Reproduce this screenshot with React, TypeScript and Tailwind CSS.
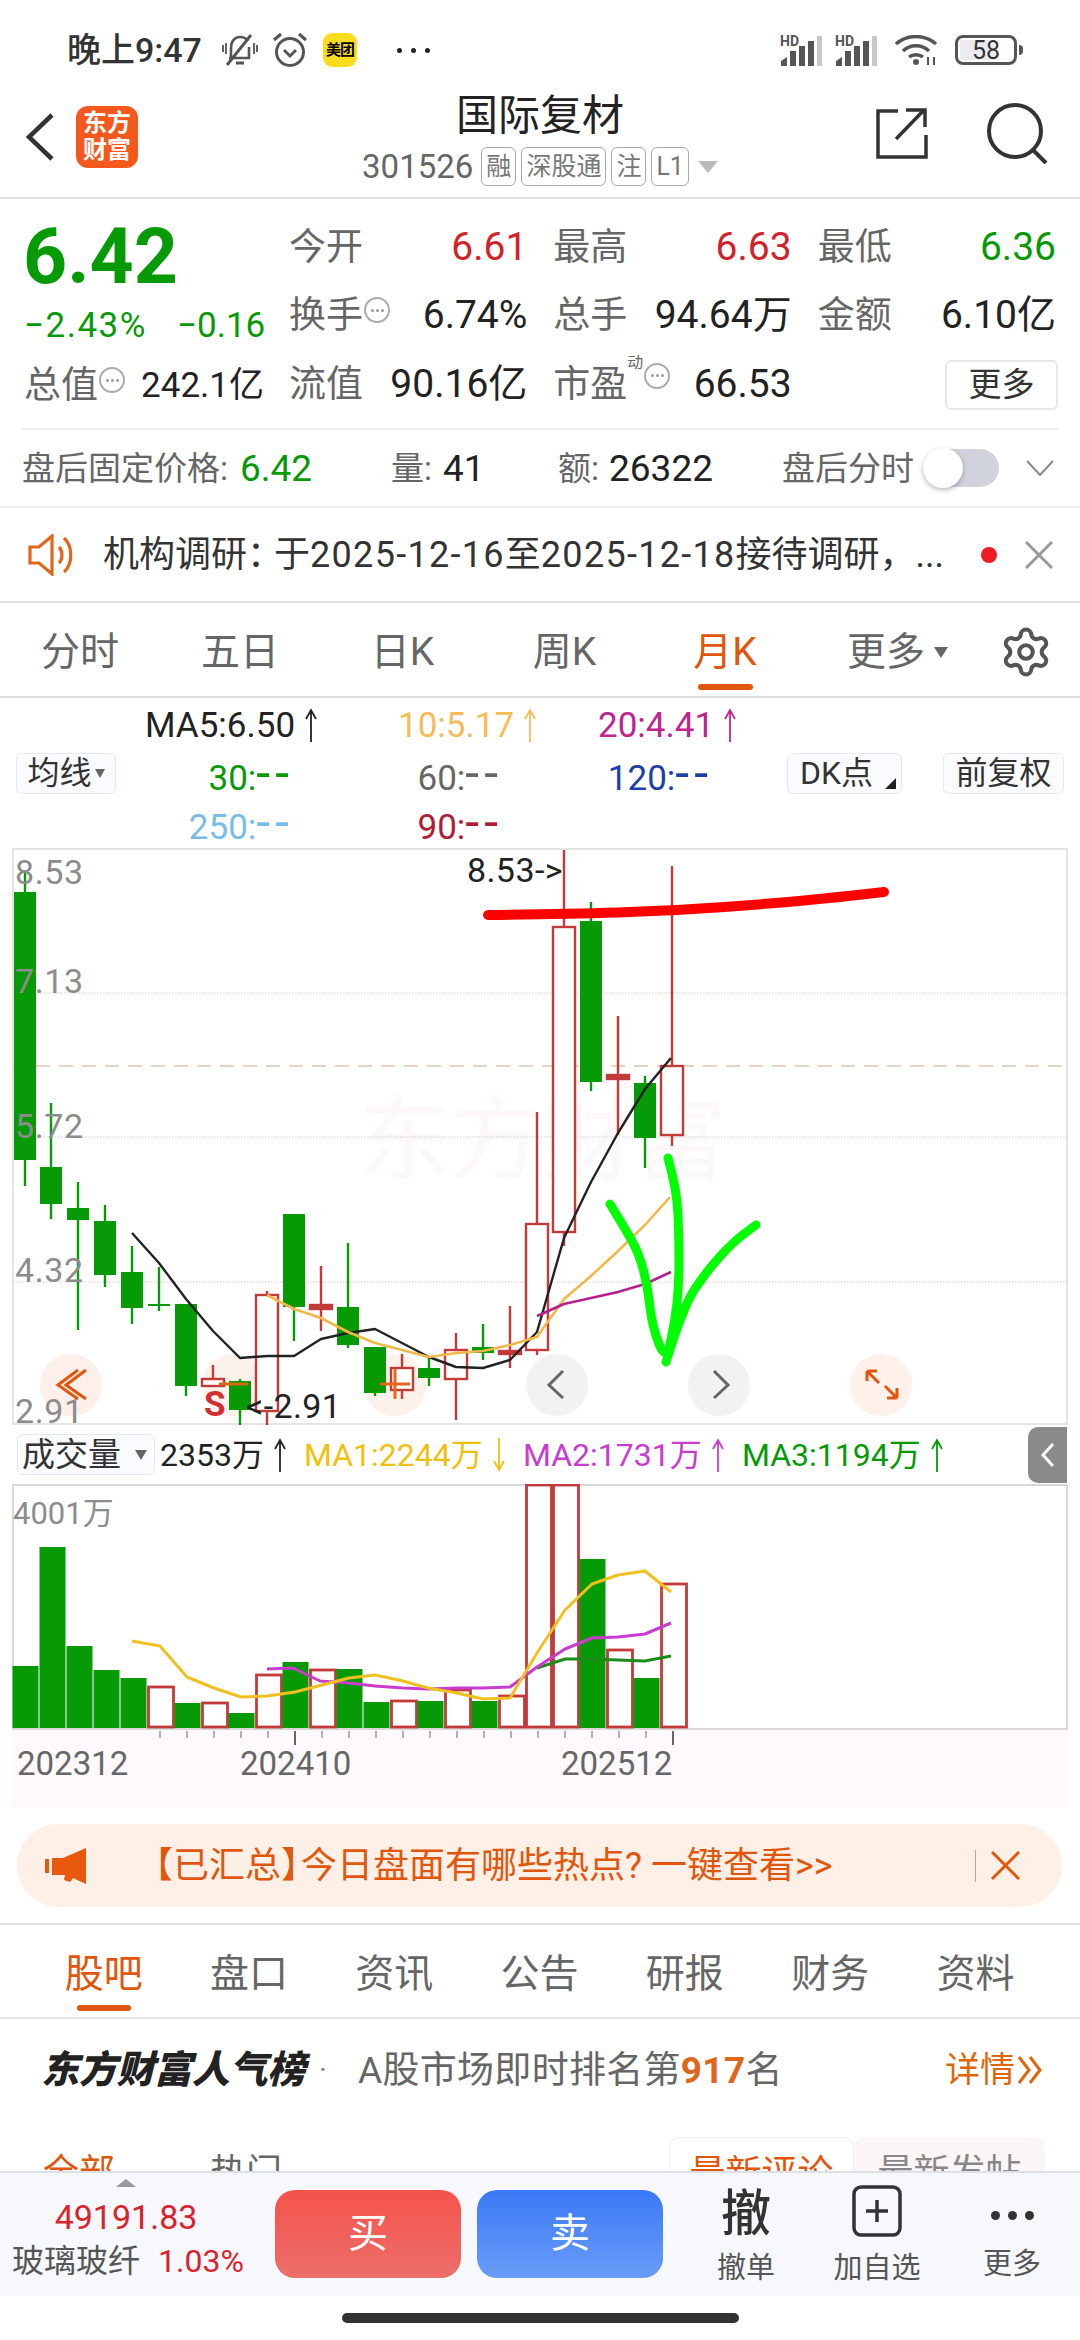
import { Settings } from 'lucide-react'

type Pt = [number, number]
type Candle = { x: number; hi: number; top: number; bot: number; lo: number; up?: boolean }

const RED = '#c23a3a'
const GREEN = '#079a07'
const ORANGE = '#e0560c'

const candles: Candle[] = [
  { x: 25, hi: 872, top: 892, bot: 1160, lo: 1186 },
  { x: 51, hi: 1103, top: 1167, bot: 1204, lo: 1219 },
  { x: 78, hi: 1182, top: 1208, bot: 1220, lo: 1330 },
  { x: 105, hi: 1205, top: 1221, bot: 1275, lo: 1287 },
  { x: 132, hi: 1246, top: 1272, bot: 1308, lo: 1324 },
  { x: 159, hi: 1267, top: 1304, bot: 1306, lo: 1311 },
  { x: 186, hi: 1304, top: 1304, bot: 1386, lo: 1396 },
  { x: 213, hi: 1365, top: 1379, bot: 1386, lo: 1386, up: true },
  { x: 240, hi: 1379, top: 1381, bot: 1410, lo: 1425 },
  { x: 267, hi: 1291, top: 1295, bot: 1411, lo: 1425, up: true },
  { x: 294, hi: 1214, top: 1214, bot: 1307, lo: 1341 },
  { x: 321, hi: 1266, top: 1305, bot: 1309, lo: 1331, up: true },
  { x: 348, hi: 1243, top: 1307, bot: 1345, lo: 1348 },
  { x: 375, hi: 1347, top: 1347, bot: 1393, lo: 1396 },
  { x: 402, hi: 1354, top: 1368, bot: 1390, lo: 1399, up: true },
  { x: 429, hi: 1357, top: 1368, bot: 1378, lo: 1386 },
  { x: 456, hi: 1333, top: 1350, bot: 1379, lo: 1420, up: true },
  { x: 483, hi: 1324, top: 1347, bot: 1353, lo: 1360 },
  { x: 510, hi: 1306, top: 1351, bot: 1354, lo: 1368, up: true },
  { x: 537, hi: 1112, top: 1224, bot: 1350, lo: 1355, up: true },
  { x: 564, hi: 850, top: 927, bot: 1232, lo: 1246, up: true },
  { x: 591, hi: 902, top: 921, bot: 1082, lo: 1091 },
  { x: 618, hi: 1016, top: 1075, bot: 1079, lo: 1135, up: true },
  { x: 645, hi: 1076, top: 1083, bot: 1138, lo: 1168 },
  { x: 672, hi: 866, top: 1066, bot: 1135, lo: 1146, up: true },
]

const ma5: Pt[] = [[132, 1233], [159, 1263], [186, 1299], [213, 1331], [240, 1358], [267, 1356], [294, 1356], [321, 1339], [348, 1333], [375, 1329], [402, 1343], [429, 1357], [456, 1367], [483, 1368], [510, 1360], [537, 1332], [564, 1238], [591, 1182], [618, 1133], [645, 1089], [671, 1058]]
const ma10: Pt[] = [[267, 1295], [294, 1309], [321, 1318], [348, 1332], [375, 1343], [402, 1350], [429, 1357], [456, 1353], [483, 1351], [510, 1345], [537, 1337], [564, 1299], [591, 1276], [618, 1251], [645, 1225], [670, 1197]]
const ma20: Pt[] = [[537, 1316], [564, 1304], [591, 1298], [618, 1292], [645, 1284], [671, 1272]]

const volumes: { top: number; up?: boolean }[] = [
  { top: 1666 }, { top: 1547 }, { top: 1646 }, { top: 1670 }, { top: 1678 },
  { top: 1687, up: true }, { top: 1703 }, { top: 1703, up: true }, { top: 1713 }, { top: 1675, up: true },
  { top: 1662 }, { top: 1670, up: true }, { top: 1669 }, { top: 1702 }, { top: 1701, up: true },
  { top: 1701 }, { top: 1690, up: true }, { top: 1701 }, { top: 1696, up: true }, { top: 1485, up: true },
  { top: 1485, up: true }, { top: 1559 }, { top: 1650, up: true }, { top: 1678 }, { top: 1584, up: true },
]

const volMa1: Pt[] = [[132, 1641], [160, 1646], [187, 1677], [214, 1688], [241, 1697], [267, 1696], [295, 1692], [322, 1685], [349, 1678], [375, 1675], [403, 1681], [428, 1688], [457, 1693], [483, 1699], [510, 1698], [537, 1653], [565, 1610], [592, 1584], [618, 1575], [645, 1571], [671, 1592]]
const volMa2: Pt[] = [[267, 1669], [293, 1668], [320, 1681], [348, 1683], [375, 1686], [403, 1688], [428, 1689], [457, 1688], [483, 1688], [510, 1687], [537, 1667], [565, 1649], [592, 1638], [618, 1637], [645, 1634], [671, 1623]]
const volMa3: Pt[] = [[537, 1668], [565, 1659], [592, 1659], [618, 1660], [645, 1661], [671, 1656]]

const redMark: Pt[] = [[488, 915], [564, 914], [671, 911], [778, 903], [840, 897], [884, 892]]
const greenMark: Pt[] = [[668, 1158], [677, 1190], [679, 1238], [679, 1284], [675, 1322], [666, 1362], [652, 1326], [648, 1288], [639, 1253], [624, 1227], [610, 1204]]
const greenTail: Pt[] = [[666, 1362], [683, 1307], [706, 1272], [733, 1242], [756, 1225]]

const pts = (p: Pt[]) => p.map((q) => q.join(',')).join(' ')

// rounds a hand-drawn stroke through the midpoints of its points
function smooth(p: Pt[]) {
  let d = `M${p[0][0]} ${p[0][1]}`
  for (let i = 1; i < p.length - 1; i++) {
    const mx = (p[i][0] + p[i + 1][0]) / 2
    const my = (p[i][1] + p[i + 1][1]) / 2
    d += ` Q${p[i][0]} ${p[i][1]} ${mx} ${my}`
  }
  const last = p[p.length - 1]
  return `${d} L${last[0]} ${last[1]}`
}

function Signal() {
  return (
    <svg width="42" height="31" viewBox="0 0 42 31">
      <text x="0" y="11" fontSize="14" fontWeight="700" fill="#555">HD</text>
      <path d="M1 31 V26 L7 22 V31 Z" fill="#555" />
      <rect x="10" y="16" width="6" height="15" fill="#555" />
      <rect x="19" y="11" width="6" height="20" fill="#555" />
      <rect x="28" y="6" width="6" height="25" fill="#555" />
      <rect x="37" y="1" width="5" height="30" fill="#c8c8c8" />
    </svg>
  )
}

function StatusBar() {
  return (
    <div className="flex h-[84px] items-center justify-between pl-[67px] pr-[57px] pt-[16px] text-[#333]">
      <div className="flex items-center">
        <span className="w-[155px] text-[34px] font-medium leading-none">晚上9:47</span>
        <svg width="36" height="34" viewBox="0 0 36 34" fill="none" stroke="#555" strokeWidth="2.6" className="mr-[14px]">
          <path d="M9 25 V15 C9 8 13 4 18 4 C21 4 24 5 26 8 M27 14 V25 H7" />
          <path d="M14 30 H22" strokeWidth="3" />
          <path d="M5 32 L29 2" strokeWidth="3" />
          <path d="M1 12 V19 M4 10 V21 M32 10 V21 M35 12 V19" strokeWidth="1.8" />
        </svg>
        <svg width="36" height="36" viewBox="0 0 36 36" fill="none" stroke="#555" strokeWidth="3" className="mr-[15px]">
          <circle cx="18" cy="20" r="13.5" />
          <path d="M12 18 L18 24 L24 18" />
          <path d="M2 8 L9 2 M34 8 L27 2" />
        </svg>
        <span className="mr-[40px] flex h-[34px] w-[34px] items-center justify-center rounded-[9px] bg-[#fddc20] text-[15px] font-bold tracking-[-1px] text-black">美团</span>
        <span className="flex gap-[9px]">
          <i className="h-[5px] w-[5px] rounded-full bg-[#222]" />
          <i className="h-[5px] w-[5px] rounded-full bg-[#222]" />
          <i className="h-[5px] w-[5px] rounded-full bg-[#222]" />
        </span>
      </div>
      <div className="flex items-center">
        <span className="mr-[13px]"><Signal /></span>
        <span className="mr-[18px]"><Signal /></span>
        <svg width="43" height="31" viewBox="0 0 43 31" fill="none" stroke="#555" strokeWidth="3.4" className="mr-[17px]">
          <path d="M1 9 C12 -1 30 -1 41 9" />
          <path d="M8 16 C15 9 27 9 34 16" />
          <path d="M14 22 C18 19 24 19 28 22" />
          <circle cx="21" cy="27" r="3" fill="#555" stroke="none" />
          <path d="M33 22 V30 M39 22 V30" strokeWidth="2" />
        </svg>
        <span className="flex h-[30px] w-[62px] rounded-[8px] border-[3px] border-[#555] p-[2px]">
          <span className="flex w-full items-center justify-center bg-[linear-gradient(90deg,#ececf0_68%,transparent_68%)] text-[25px] leading-none text-[#333]">58</span>
        </span>
        <i className="ml-[2px] h-[10px] w-[4px] rounded-r-sm bg-[#555]" />
      </div>
    </div>
  )
}

function Badge({ label }: { label: string }) {
  return (
    <span className="flex h-[39px] items-center rounded-[6px] border border-[#aaa] px-[4px] text-[25px] leading-none text-[#777]">{label}</span>
  )
}

function NavBar() {
  return (
    <div className="grid h-[115px] grid-cols-[210px_1fr_210px] border-b-2 border-[#ddd]">
      <div className="flex items-center pb-[7px] pl-[26px]">
        <svg width="28" height="48" viewBox="0 0 28 48" fill="none" stroke="#333" strokeWidth="4.5">
          <path d="M26 2 L3 24 L26 46" />
        </svg>
        <span className="ml-[22px] flex h-[62px] w-[62px] items-center justify-center rounded-[12px] bg-[#f4581c] text-center text-[24px] font-bold leading-[27px] text-white">东方<br />财富</span>
      </div>
      <div className="flex flex-col items-center pt-[9px]">
        <span className="text-[42px] leading-[46px] text-[#222]">国际复材</span>
        <div className="mt-[8px] flex items-center gap-[5px]">
          <span className="mr-[3px] text-[33px] leading-none text-[#666]">301526</span>
          <Badge label="融" />
          <Badge label="深股通" />
          <Badge label="注" />
          <Badge label="L1" />
          <i className="ml-[4px] h-0 w-0 border-x-[10px] border-t-[12px] border-x-transparent border-t-[#bbb]" />
        </div>
      </div>
      <div className="flex items-center pb-[15px] pl-[6px]">
        <svg width="52" height="52" viewBox="0 0 52 52" fill="none" stroke="#333" strokeWidth="3.5">
          <path d="M22 4 H2 V50 H50 V28" />
          <path d="M20 32 L48 3 M30 3 H49 V20" />
        </svg>
        <svg width="62" height="62" viewBox="0 0 62 62" fill="none" stroke="#333" strokeWidth="4" className="ml-[58px]">
          <circle cx="29" cy="29" r="26" />
          <path d="M46 47 L60 61" />
        </svg>
      </div>
    </div>
  )
}

function DotInfo() {
  return (
    <span className="mx-[1px] flex h-[26px] w-[26px] items-center justify-center gap-[2px] self-start rounded-full border-2 border-[#aaa]">
      <i className="h-[3px] w-[3px] rounded-full bg-[#999]" />
      <i className="h-[3px] w-[3px] rounded-full bg-[#999]" />
      <i className="h-[3px] w-[3px] rounded-full bg-[#999]" />
    </span>
  )
}

function Stat({ label, value, tone = 'text-[#222]', info }: { label: string; value: string; tone?: string; info?: boolean }) {
  return (
    <div className="flex items-center justify-between">
      <span className="flex items-center text-[37px] leading-none text-[#666]">
        {label}
        {info && <DotInfo />}
      </span>
      <span className={`text-[39px] leading-none ${tone}`}>{value}</span>
    </div>
  )
}

function Quote() {
  return (
    <div className="flex h-[229px] pt-[14px]">
      <div className="flex w-[289px] flex-col pl-[23px]">
        <span className="mt-[5px] h-[82px] text-[77px] font-bold leading-[78px] text-[#079a07]">6.42</span>
        <div className="flex h-[50px] items-center text-[35px] leading-none text-[#079a07]">
          <span className="ml-[1px] w-[153px] tracking-[1.5px]">−2.43%</span>
          <span>−0.16</span>
        </div>
        <div className="mt-[1px] flex h-[69px] w-[241px] items-center justify-between pl-[1px]">
          <span className="flex items-center text-[37px] leading-none text-[#666]">总值<DotInfo /></span>
          <span className="text-[35px] leading-none text-[#222]">242.1亿</span>
        </div>
      </div>
      <div className="grid w-[767px] grid-cols-3 grid-rows-[68px_69px_69px] gap-x-[26px]">
        <Stat label="今开" value="6.61" tone="text-[#d0232b]" />
        <Stat label="最高" value="6.63" tone="text-[#d0232b]" />
        <Stat label="最低" value="6.36" tone="text-[#079a07]" />
        <Stat label="换手" value="6.74%" info />
        <Stat label="总手" value="94.64万" />
        <Stat label="金额" value="6.10亿" />
        <Stat label="流值" value="90.16亿" />
        <div className="flex items-center justify-between">
          <span className="flex items-center text-[37px] leading-none text-[#666]">
            市盈<sup className="mb-[28px] text-[16px] leading-none">动</sup><DotInfo />
          </span>
          <span className="text-[39px] leading-none text-[#222]">66.53</span>
        </div>
        <div className="flex items-center justify-end">
          <span className="-mr-[2px] flex h-[50px] w-[113px] items-center justify-center rounded-[6px] border-2 border-[#e8e8e8] text-[33px] leading-none text-[#333]">更多</span>
        </div>
      </div>
    </div>
  )
}

function AfterHours() {
  return (
    <div className="border-b-2 border-[#eee]">
      <div className="mx-[22px] flex h-[78px] items-center border-t-2 border-[#eee] text-[33px] leading-none text-[#666]">
        <span className="w-[218px]">盘后固定价格:</span>
        <span className="w-[151px] text-[37px] text-[#079a07]">6.42</span>
        <span>量:</span>
        <span className="ml-[11px] w-[115px] text-[37px] text-[#222]">41</span>
        <span>额:</span>
        <span className="ml-[10px] w-[173px] text-[37px] text-[#222]">26322</span>
        <span className="w-[141px]">盘后分时</span>
        <span className="flex h-[38px] w-[76px] items-center rounded-full bg-[#d0d2dc]">
          <i className="h-[40px] w-[40px] rounded-full bg-white shadow-[0_2px_5px_rgba(0,0,0,0.28)]" />
        </span>
        <svg width="28" height="16" viewBox="0 0 28 16" fill="none" stroke="#888" strokeWidth="2" className="ml-[27px]">
          <path d="M1 1 L14 15 L27 1" />
        </svg>
      </div>
    </div>
  )
}

function Notice() {
  return (
    <div className="flex h-[95px] items-center border-b-2 border-[#ddd] pl-[28px]">
      <svg width="46" height="42" viewBox="0 0 46 42" fill="none" stroke="#e0661c" strokeWidth="3.2">
        <path d="M2 13 H11 L24 2 V40 L11 29 H2 Z" />
        <path d="M31 13 C35 17 35 25 31 29 M36 4 C45 12 45 30 36 38" />
      </svg>
      <span className="ml-[29px] w-[878px] text-[36px] leading-none text-[#333]">
        机构调研<span className="inline-block w-[27px]">：</span>于<span className="tracking-[1.3px]">2025-12-16</span>至<span className="tracking-[1.3px]">2025-12-18</span>接待调研，...
      </span>
      <i className="h-[16px] w-[16px] rounded-full bg-[#ee1c25]" />
      <svg width="28" height="28" viewBox="0 0 28 28" stroke="#999" strokeWidth="3" className="ml-[28px]">
        <path d="M1 1 L27 27 M27 1 L1 27" />
      </svg>
    </div>
  )
}

function PeriodTabs() {
  const tabs = [
    { label: '分时', w: 'w-[160px]' },
    { label: '五日', w: 'w-[160px]' },
    { label: '日K', w: 'w-[165px]' },
    { label: '周K', w: 'w-[159px]' },
    { label: '月K', w: 'w-[162px]', active: true },
  ]
  return (
    <div className="flex h-[95px] items-start border-b-2 border-[#ddd] pt-[27px]">
      {tabs.map((t) => (
        <div key={t.label} className={`flex flex-col items-center ${t.w}`}>
          <span className={`text-[39px] leading-[44px] ${t.active ? 'text-[#e0560c]' : 'text-[#666]'}`}>{t.label}</span>
          {t.active && <i className="mt-[10px] h-[6px] w-[55px] rounded-full bg-[#e0560c]" />}
        </div>
      ))}
      <span className="ml-[41px] flex items-center text-[39px] leading-[44px] text-[#666]">
        更多
        <i className="ml-[9px] h-0 w-0 border-x-[7px] border-t-[11px] border-x-transparent border-t-[#666]" />
      </span>
      <Settings size={54} strokeWidth={1.8} className="-mt-[5px] ml-[51px] text-[#555]" />
    </div>
  )
}

function Up({ color }: { color: string }) {
  return (
    <svg width="12" height="34" viewBox="0 0 12 34" fill="none" stroke={color} strokeWidth="1.8" className="ml-[10px]">
      <path d="M6 34 V2 M1 11 L6 2 L11 11" />
    </svg>
  )
}

function Down({ color }: { color: string }) {
  return (
    <svg width="12" height="34" viewBox="0 0 12 34" fill="none" stroke={color} strokeWidth="1.8" className="ml-[10px]">
      <path d="M6 0 V32 M1 23 L6 32 L11 23" />
    </svg>
  )
}

// the empty "--" values are drawn wider and further apart than plain hyphens
function Empty() {
  return <span className="-mr-[5px] text-[50px] tracking-[5px]">--</span>
}

function MaLegend() {
  const btn = 'flex h-[41px] items-center justify-center rounded-[6px] border border-[#e4e8f0] bg-[#fafbff] text-[32px] leading-none text-[#333]'
  return (
    <div className="flex h-[150px] flex-col pt-[4px] text-[35px] leading-none">
      <div className="flex h-[46px] items-center">
        <span className="ml-[145px] flex w-[253px] items-center text-[#222]">MA5:6.50<Up color="#222" /></span>
        <span className="flex w-[200px] items-center text-[#f5bc5a]">10:5.17<Up color="#f5bc5a" /></span>
        <span className="flex items-center text-[#c0248c]">20:4.41<Up color="#c0248c" /></span>
      </div>
      <div className="flex h-[50px] items-center">
        <span className={`${btn} ml-[16px] w-[100px] gap-[3px]`}>
          均线<i className="h-0 w-0 border-x-[5px] border-t-[9px] border-x-transparent border-t-[#666]" />
        </span>
        <span className="w-[173px] text-right text-[#079a07]">30:<Empty /></span>
        <span className="w-[209px] text-right text-[#666]">60:<Empty /></span>
        <span className="w-[210px] text-right text-[#1c3fa8]">120:<Empty /></span>
        <span className={`${btn} relative ml-[79px] w-[115px] justify-start pl-[12px]`}>
          DK点
          <i className="absolute bottom-[4px] right-[5px] h-0 w-0 border-b-[11px] border-l-[11px] border-b-[#222] border-l-transparent" />
        </span>
        <span className={`${btn} ml-[41px] w-[121px]`}>前复权</span>
      </div>
      <div className="flex h-[48px] items-center">
        <span className="w-[289px] text-right text-[#78bdea]">250:<Empty /></span>
        <span className="w-[209px] text-right text-[#b01c34]">90:<Empty /></span>
      </div>
    </div>
  )
}

function CandleGlyph({ c }: { c: Candle }) {
  const color = c.up ? RED : GREEN
  const thin = c.bot - c.top < 6
  return (
    <g>
      <line x1={c.x} y1={c.hi} x2={c.x} y2={c.top} stroke={color} strokeWidth="2.4" />
      <line x1={c.x} y1={c.bot} x2={c.x} y2={c.lo} stroke={color} strokeWidth="2.4" />
      <rect
        x={c.x - 11}
        y={c.top}
        width="22"
        height={Math.max(c.bot - c.top, 2)}
        fill={c.up && !thin ? '#fff' : color}
        stroke={c.up ? color : 'none'}
        strokeWidth="2.4"
      />
    </g>
  )
}

function PriceChart() {
  const labels: [string, number][] = [['8.53', 884], ['7.13', 993], ['5.72', 1138], ['4.32', 1282], ['2.91', 1423]]
  return (
    <svg width="1080" height="577" viewBox="0 848 1080 577" className="block">
      <rect x="13" y="849" width="1054" height="575" fill="#fff" stroke="#e4e4e4" strokeWidth="2" />
      <text x="358" y="1172" fontSize="92" fill="#fcf8fa">东方财富</text>
      {[993, 1137, 1282].map((y) => (
        <line key={y} x1="13" x2="1067" y1={y} y2={y} stroke="#ccc" strokeWidth="1" strokeDasharray="1.5 1.5" />
      ))}
      <line x1="13" x2="1067" y1="1066" y2="1066" stroke="#e3c4b0" strokeWidth="1.6" strokeDasharray="14 9" />

      {/* round controls stay behind the candles, their marks go on top */}
      <circle cx="71" cy="1385" r="31" fill="#fdf0ea" />
      <circle cx="233" cy="1385" r="31" fill="#fdf1ec" />
      <circle cx="395" cy="1385" r="31" fill="#fdf1ec" />
      <circle cx="557" cy="1385" r="31" fill="#f3f1f4" />
      <circle cx="719" cy="1385" r="31" fill="#f3f1f4" />
      <circle cx="881" cy="1385" r="31" fill="#fdf1ea" />

      {candles.map((c) => (
        <CandleGlyph key={c.x} c={c} />
      ))}
      <polyline points={pts(ma5)} fill="none" stroke="#222" strokeWidth="2.4" strokeLinejoin="round" />
      <polyline points={pts(ma10)} fill="none" stroke="#f0b848" strokeWidth="2.6" strokeLinejoin="round" />
      <polyline points={pts(ma20)} fill="none" stroke="#b5218c" strokeWidth="2.6" strokeLinejoin="round" />
      {labels.map(([t, y]) => (
        <text key={t} x="15" y={y} fontSize="34" letterSpacing="0.6" fill="#8c8c8c">{t}</text>
      ))}
      <text x="467" y="882" fontSize="34" letterSpacing="0.4" fill="#222">8.53-&gt;</text>
      <text x="246" y="1418" fontSize="34" letterSpacing="0.4" fill="#222">&lt;-2.91</text>
      <text x="204" y="1416" fontSize="35" fontWeight="700" fill="#d03030">S</text>

      <path d="M78 1370 L58 1385 L78 1399 M86 1370 L66 1385 L86 1399" fill="none" stroke={ORANGE} strokeWidth="3" />
      <path d="M219 1384 H248" stroke="#d06a10" strokeWidth="3" />
      <path d="M380 1384 H410 M395 1369 V1399" stroke="#e6641c" strokeWidth="3" />
      <path d="M563 1371 L549 1385 L563 1398" fill="none" stroke="#666" strokeWidth="3" />
      <path d="M714 1371 L728 1385 L714 1398" fill="none" stroke="#666" strokeWidth="3" />
      <path d="M867 1371 L879 1383 M867 1371 V1381 M867 1371 H877 M897 1398 L885 1386 M897 1398 V1388 M897 1398 H887" fill="none" stroke={ORANGE} strokeWidth="3" />

      {/* pen marks over the chart */}
      <path d={smooth(redMark)} fill="none" stroke="#ff0000" strokeWidth="10" strokeLinecap="round" strokeLinejoin="round" />
      <path d={smooth(greenMark)} fill="none" stroke="#00ff00" strokeWidth="9" strokeLinecap="round" strokeLinejoin="round" />
      <path d={smooth(greenTail)} fill="none" stroke="#00ff00" strokeWidth="9" strokeLinecap="round" strokeLinejoin="round" />
    </svg>
  )
}

function VolumeHeader() {
  return (
    <div className="flex h-[59px] items-center text-[32px] leading-none">
      <span className="ml-[17px] flex h-[41px] w-[138px] items-center rounded-[6px] border border-[#e4e8f0] bg-[#fafbff] pl-[4px] text-[33px] text-[#333]">
        成交量
        <i className="ml-[14px] h-0 w-0 border-x-[6px] border-t-[10px] border-x-transparent border-t-[#666]" />
      </span>
      <span className="ml-[5px] flex w-[144px] items-center text-[#222]">2353万<Up color="#222" /></span>
      <span className="flex w-[219px] items-center text-[#f0c010]">MA1:2244万<Down color="#f0c010" /></span>
      <span className="flex w-[219px] items-center text-[#c83cd0]">MA2:1731万<Up color="#c83cd0" /></span>
      <span className="flex w-[286px] items-center text-[#079a07]">MA3:1194万<Up color="#079a07" /></span>
      <span className="flex h-[56px] w-[39px] items-center justify-center rounded-l-[10px] bg-[#8a8a8a]">
        <svg width="14" height="26" viewBox="0 0 14 26" fill="none" stroke="#fff" strokeWidth="3">
          <path d="M12 2 L2 13 L12 24" />
        </svg>
      </span>
    </div>
  )
}

function VolumeChart() {
  const ticks = Array.from({ length: 20 }, (_, i) => 160 + i * 27)
  return (
    <svg width="1080" height="323" viewBox="0 1484 1080 323" className="block">
      <rect x="13" y="1485" width="1054" height="244" fill="#fff" stroke="#d8d8d8" strokeWidth="2" />
      <rect x="12" y="1730" width="1056" height="77" fill="#fdf9fc" />
      <text x="13" y="1524" fontSize="31" fill="#8c8c8c">4001万</text>
      {volumes.map((b, i) => {
        const x = 12.5 + i * 27
        return b.up ? (
          <rect key={i} x={x + 1} y={b.top} width="25" height={1727 - b.top} fill="#fff" stroke={RED} strokeWidth="2.8" />
        ) : (
          <rect key={i} x={x} y={b.top} width="26" height={1728 - b.top} fill={GREEN} />
        )
      })}
      <polyline points={pts(volMa3)} fill="none" stroke="#1a8c1a" strokeWidth="3" />
      <polyline points={pts(volMa2)} fill="none" stroke="#c83cd0" strokeWidth="3" strokeLinejoin="round" />
      <polyline points={pts(volMa1)} fill="none" stroke="#f0c020" strokeWidth="3" strokeLinejoin="round" />
      {ticks.map((x) => (
        <line key={x} x1={x} x2={x} y1="1731" y2={x === 295 || x === 673 ? 1745 : 1738} stroke="#666" strokeWidth={x === 295 || x === 673 ? 2 : 1} />
      ))}
      <text x="17" y="1775" fontSize="33" fill="#666">202312</text>
      <text x="240" y="1775" fontSize="33" fill="#666">202410</text>
      <text x="561" y="1775" fontSize="33" fill="#666">202512</text>
    </svg>
  )
}

function PromoBanner() {
  return (
    <div className="mx-[17px] mt-[17px] flex h-[83px] w-[1045px] items-center rounded-full bg-[#fef0e7] pl-[28px] text-[36px] leading-none text-[#e0560c]">
      <svg width="41" height="36" viewBox="0 0 41 36" fill="#e8590c">
        <rect x="0" y="11" width="4" height="14" />
        <path d="M7 10 H18 L41 0 V36 L28 30 L25 34 L19 32 L20 27 H7 Z" />
      </svg>
      <span className="ml-[69px] w-[820px] [font-feature-settings:'halt']">
        【已汇总】<span className="ml-[2px]">今日盘面有哪些热点? 一键查看&gt;&gt;</span>
      </span>
      <i className="h-[32px] w-px bg-[#c9a08a]" />
      <svg width="29" height="29" viewBox="0 0 29 29" stroke="#e0560c" strokeWidth="3" className="ml-[15px]">
        <path d="M1 1 L28 28 M28 1 L1 28" />
      </svg>
    </div>
  )
}

function SectionTabs() {
  const tabs = ['股吧', '盘口', '资讯', '公告', '研报', '财务', '资料']
  return (
    <div className="mt-[16px] grid h-[96px] grid-cols-[repeat(7,145.3px)] border-y-2 border-[#e4e4e4] pl-[31px] pt-[27px]">
      {tabs.map((t, i) => (
        <div key={t} className="flex flex-col items-center">
          <span className={`text-[39px] leading-[44px] ${i === 0 ? 'text-[#e0560c]' : 'text-[#666]'}`}>{t}</span>
          {i === 0 && <i className="mt-[9px] h-[6px] w-[54px] rounded-full bg-[#e0560c]" />}
        </div>
      ))}
    </div>
  )
}

function RankRow() {
  return (
    <div className="flex h-[100px] items-center pl-[41px] pt-[2px] leading-none">
      <span className="w-[278px] text-[38px] font-black italic tracking-[-0.3px] text-[#222]">东方财富人气榜</span>
      <span className="w-[39px] text-[30px] text-[#888]">·</span>
      <span className="text-[37px] tracking-[0.3px] text-[#666]">A股市场即时排名第<b className="font-bold text-[#e0661c]">917</b>名</span>
      <span className="ml-auto mr-[37px] flex items-center text-[35px] text-[#e0660c]">
        详情
        <svg width="26" height="30" viewBox="0 0 26 30" fill="none" stroke="#e0660c" strokeWidth="3" className="ml-[2px]">
          <path d="M2 2 L12 15 L2 28 M13 2 L23 15 L13 28" />
        </svg>
      </span>
    </div>
  )
}

// only the top of this row shows above the bottom bar
function FilterRow() {
  return (
    <div className="mt-[18px] flex items-start pl-[43px] text-[36px] leading-none">
      <span className="mt-[18px] w-[167px] text-[#e0560c]">全部</span>
      <span className="mt-[18px] text-[#666]">热门</span>
      <div className="ml-[387px] flex h-[60px]">
        <span className="flex w-[185px] justify-center rounded-t-[10px] border border-[#eee] pt-[18px] text-[36px] text-[#e0560c]">最新评论</span>
        <span className="flex w-[191px] justify-center rounded-t-[10px] bg-[#faf6f6] pt-[18px] text-[36px] text-[#888]">最新发帖</span>
      </div>
    </div>
  )
}

function BottomBar() {
  return (
    <div className="flex h-[125px] items-start border-t-2 border-[#dde0e6] bg-[#f6f8fc]">
      <div className="flex w-[275px] flex-col items-center pr-[23px] pt-[6px]">
        <i className="h-0 w-0 border-x-[10px] border-b-[8px] border-x-transparent border-b-[#999]" />
        <span className="mt-[13px] text-[34px] leading-none text-[#d9232c]">49191.83</span>
        <span className="mt-[11px] flex items-center self-start pl-[12px] text-[32px] leading-none text-[#555]">
          玻璃玻纤
          <span className="ml-[18px] whitespace-nowrap text-[#d9232c]">1.03%</span>
        </span>
      </div>
      <span className="mt-[17px] flex h-[88px] w-[186px] items-center justify-center rounded-[20px] bg-gradient-to-b from-[#f5524a] to-[#ec6e6a] text-[40px] leading-none text-white">买</span>
      <span className="ml-[16px] mt-[17px] flex h-[88px] w-[186px] items-center justify-center rounded-[20px] bg-gradient-to-b from-[#3a78f5] to-[#6a9cf8] text-[40px] leading-none text-white">卖</span>
      <div className="ml-[54px] flex w-[58px] flex-col items-center pt-[14px]">
        <span className="h-[58px] text-[50px] font-medium leading-[54px] text-[#333]">撤</span>
        <span className="mt-[9px] whitespace-nowrap text-[29px] leading-none text-[#555]">撤单</span>
      </div>
      <div className="ml-[58px] flex w-[88px] flex-col items-center pt-[12px]">
        <svg width="50" height="52" viewBox="0 0 50 52" fill="none" stroke="#333" strokeWidth="3.5">
          <rect x="2" y="2" width="46" height="48" rx="7" />
          <path d="M25 15 V37 M14 26 H36" />
        </svg>
        <span className="mt-[17px] whitespace-nowrap text-[29px] leading-none text-[#555]">加自选</span>
      </div>
      <div className="ml-[62px] flex w-[58px] flex-col items-center pt-[38px]">
        <span className="flex gap-[8px]">
          <i className="h-[9px] w-[9px] rounded-full bg-[#333]" />
          <i className="h-[9px] w-[9px] rounded-full bg-[#333]" />
          <i className="h-[9px] w-[9px] rounded-full bg-[#333]" />
        </span>
        <span className="mt-[30px] whitespace-nowrap text-[29px] leading-none text-[#555]">更多</span>
      </div>
    </div>
  )
}

export default function App() {
  return (
    <div className="flex h-[2340px] w-[1080px] flex-col overflow-hidden bg-white font-[Roboto,'Noto_Sans_CJK_SC',sans-serif]">
      <div className="h-[2171px] shrink-0 overflow-hidden">
        <StatusBar />
        <NavBar />
        <Quote />
        <AfterHours />
        <Notice />
        <PeriodTabs />
        <MaLegend />
        <PriceChart />
        <VolumeHeader />
        <VolumeChart />
        <PromoBanner />
        <SectionTabs />
        <RankRow />
        <FilterRow />
      </div>
      <BottomBar />
      <div className="flex flex-1 items-center justify-center">
        <i className="h-[10px] w-[397px] rounded-full bg-[#333]" />
      </div>
    </div>
  )
}
